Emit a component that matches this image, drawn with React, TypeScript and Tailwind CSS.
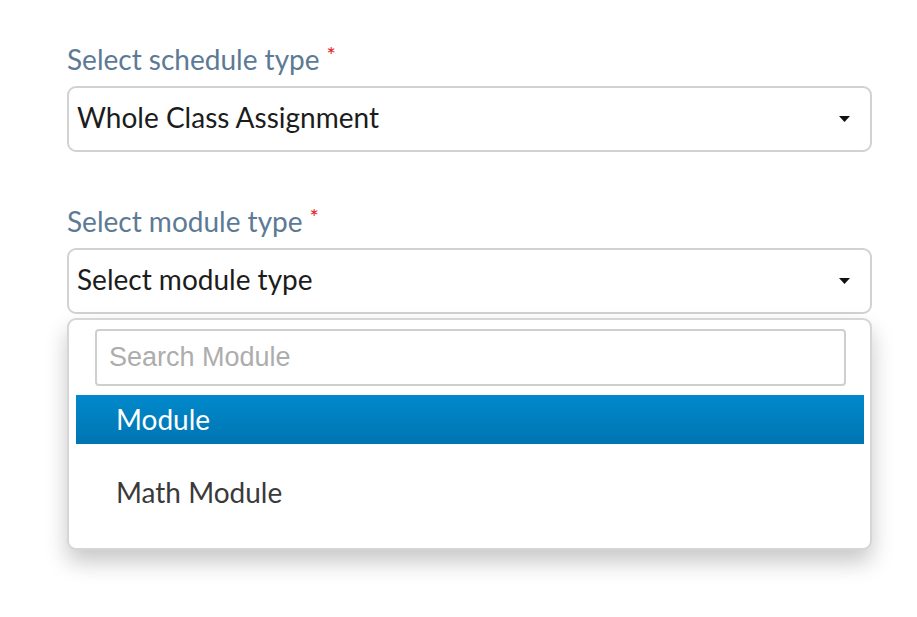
import { useState } from 'react'

type Option = { id: string; label: string }

const modules: Option[] = [
  { id: 'module', label: 'Module' },
  { id: 'math', label: 'Math Module' },
]

function Caret() {
  return (
    <svg width="11" height="6" viewBox="0 0 11 6" className="shrink-0">
      <path d="M0 0h11L5.5 6z" fill="#111" />
    </svg>
  )
}

function Label({ children }: { children: string }) {
  return (
    <div className="flex h-[32px] items-center pb-[2px] text-[28px] leading-[32px] text-[#5c7a95]">
      {children}
      <span className="ml-[7px] -mt-[8px] text-[22px] leading-none text-[#e0201c]">*</span>
    </div>
  )
}

function SelectBox({ value }: { value: string }) {
  return (
    <div className="flex h-[66px] items-center justify-between rounded-[9px] border-2 border-[#d2d2d2] bg-white pl-[8px] pr-[20px] text-[28px] text-[#1c1c1c]">
      <span className="pb-[4px]">{value}</span>
      <Caret />
    </div>
  )
}

export default function App() {
  const [active, setActive] = useState('module')
  const [query, setQuery] = useState('')
  const shown = modules.filter((m) => m.label.toLowerCase().includes(query.toLowerCase()))

  return (
    <div className="min-h-[617px] bg-white font-['Lato',sans-serif]">
      <div className="ml-[67px] w-[805px] pt-[44px]">
        <Label>Select schedule type</Label>
        <div className="mt-[10px]">
          <SelectBox value="Whole Class Assignment" />
        </div>

        <div className="mt-[54px]">
          <Label>Select module type</Label>
        </div>
        <div className="mt-[10px]">
          <SelectBox value="Select module type" />
        </div>

        <div className="mt-[4px] h-[232px] rounded-[9px] border-2 border-[#d6d6d6] bg-white pt-[9px] shadow-[0_12px_22px_rgba(0,0,0,0.22)]">
          <div className="pl-[26px] pr-[24px]">
            <input
              value={query}
              onChange={(e) => setQuery(e.target.value)}
              placeholder="Search Module"
              className="h-[57px] w-full rounded-[4px] border-2 border-[#cfcfcf] px-[12px] font-['Liberation_Sans',Arial,sans-serif] text-[27px] text-[#333] outline-none placeholder:text-[#adadad]"
            />
          </div>
          <ul className="mt-[9px] pl-[7px] pr-[6px]">
            {shown.map((m) => (
              <li
                key={m.id}
                onMouseEnter={() => setActive(m.id)}
                className={`flex h-[49px] items-center pb-[2px] pl-[40px] text-[28px] ${
                  active === m.id
                    ? 'bg-gradient-to-b from-[#0089cc] to-[#0075b2] text-white'
                    : 'mt-[24px] text-[#3a3a3a]'
                }`}
              >
                {m.label}
              </li>
            ))}
          </ul>
        </div>
      </div>
    </div>
  )
}
